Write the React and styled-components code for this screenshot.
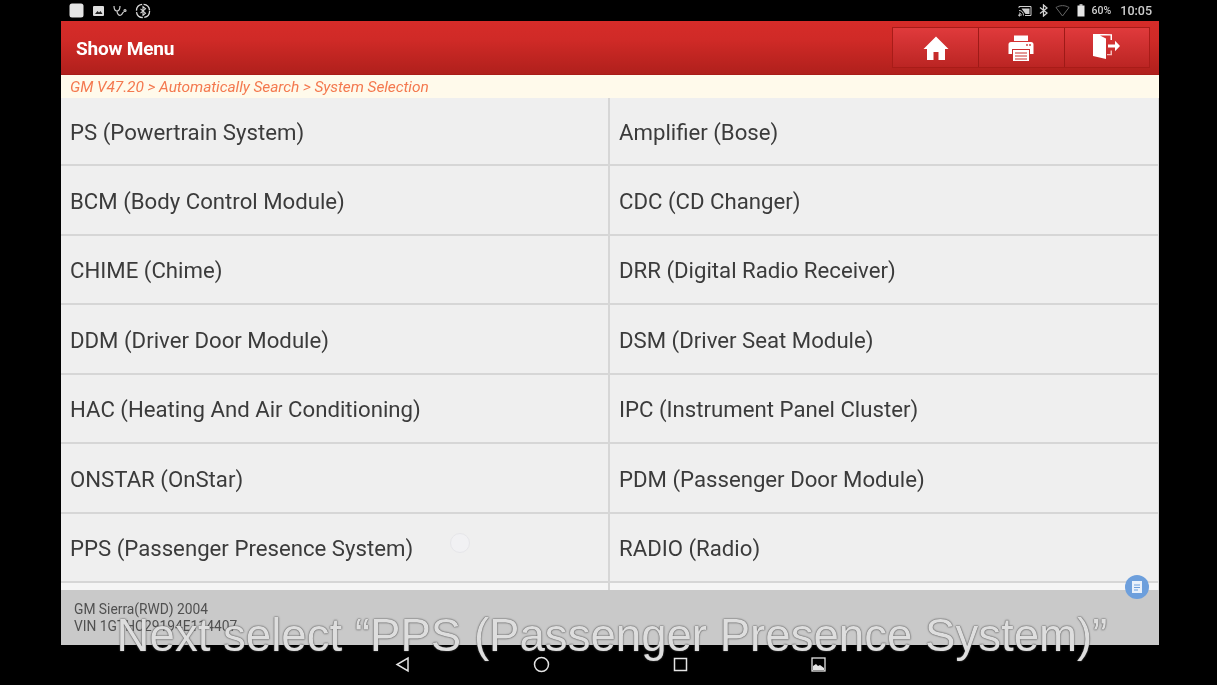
import React from "react";
import styled, { createGlobalStyle } from "styled-components";

const Global = createGlobalStyle`
  html, body { margin: 0; padding: 0; background: #000; }
  body { width: 1217px; height: 685px; overflow: hidden; font-family: Roboto, "Liberation Sans", sans-serif; }
`;

const Page = styled.div`
  position: relative;
  width: 1217px;
  height: 685px;
  background: #000;
  display: flex;
  flex-direction: column;
  overflow: hidden;
  filter: blur(0.45px);
`;
const StatusBar = styled.div`
  height: 21px;
  margin: 0 65px 0 69px;
  display: flex;
  align-items: center;
  justify-content: space-between;
  color: #d8d8d8;
`;
const StatusGroup = styled.div`
  display: flex;
  align-items: center;
  gap: ${(p) => p.$gap || 8}px;
`;
const StatusText = styled.span`
  font-size: ${(p) => p.$size}px;
  font-weight: 500;
  color: #cfcfcf;
  margin-left: ${(p) => p.$ml || 0}px;
`;
const Screen = styled.div`
  width: 1098px;
  margin-left: 61px;
  height: 624px;
  display: flex;
  flex-direction: column;
  background: #efefef;
`;
const Header = styled.div`
  height: 54px;
  box-sizing: border-box;
  background: linear-gradient(#d62c29 0%, #d02a27 35%, #b0201c 100%);
  border-bottom: 1px solid #a81c18;
  display: flex;
  align-items: center;
  justify-content: space-between;
  padding: 2px 9px 0 15px;
`;
const Title = styled.div`
  color: #fff;
  font-size: 19px;
  font-weight: 700;
  letter-spacing: -0.2px;
`;
const ButtonRow = styled.div`
  display: flex;
  margin-top: -2px;
  border: 1px solid #a81c18;
`;
const HeaderButton = styled.div`
  box-sizing: border-box;
  width: 85.4px;
  height: 39px;
  display: flex;
  align-items: center;
  justify-content: center;
  background: linear-gradient(#e03a3c, #bb2523);
  & + & { border-left: 1px solid #9e1a17; }
`;
const Crumb = styled.div`
  height: 23px;
  background: #fffaeb;
  color: #f4794f;
  font-size: 15.5px;
  font-style: italic;
  line-height: 24px;
  padding-left: 9px;
  letter-spacing: -0.08px;
`;
const List = styled.div`
  height: 492px;
  overflow: hidden;
  display: grid;
  grid-template-columns: 549px 1fr;
  grid-template-rows: 68px;
  grid-auto-rows: 69.5px;
  border-right: 1px solid #dcdcdc;
`;
const Cell = styled.div`
  box-sizing: border-box;
  display: flex;
  align-items: center;
  padding: ${(p) => (p.$first ? "1px" : "2px")} 0 0 9px;
  color: #3b3b3b;
  font-size: 22.2px;
  background: ${(p) => (p.$peek ? "#f5f5f5" : "#efefef")};
  border-bottom: 2px solid #d6d6d6;
  border-right: ${(p) => (p.$left ? "2px solid #d6d6d6" : "0")};
`;
const Footer = styled.div`
  height: 55px;
  box-sizing: border-box;
  background: #c9c9c9;
  color: #505050;
  font-size: 13.8px;
  line-height: 16.5px;
  padding: 11px 0 0 13px;
`;
const NavBar = styled.div`
  height: 40px;
  display: flex;
  align-items: center;
  padding: 0 0 0 394px;
  gap: 121.8px;
`;
const NavIcon = styled.svg`
  width: 17px;
  height: 17px;
  flex: none;
  margin-top: -1px;
`;
const Caption = styled.div`
  position: absolute;
  left: 0;
  right: 0;
  top: 609px;
  padding-left: 7px;
  text-align: center;
  font-family: "Liberation Sans", Arial, sans-serif;
  font-size: 45.6px;
  line-height: 54px;
  white-space: nowrap;
  color: #dedede;
  text-shadow: 0 0 2px #555, 0 0 1px #444;
`;
const Touch = styled.div`
  position: absolute;
  left: 450px;
  top: 533px;
  width: 18px;
  height: 18px;
  border-radius: 50%;
  border: 1px solid #e6e6e9;
  background: #f1f1f3;
`;
const Fab = styled.div`
  position: absolute;
  left: 1125px;
  top: 575px;
  width: 24px;
  height: 24px;
  border-radius: 50%;
  background: #6d9fdc;
  display: flex;
  align-items: center;
  justify-content: center;
`;

const rows = [
  ["PS (Powertrain System)", "Amplifier (Bose)"],
  ["BCM (Body Control Module)", "CDC (CD Changer)"],
  ["CHIME (Chime)", "DRR (Digital Radio Receiver)"],
  ["DDM (Driver Door Module)", "DSM (Driver Seat Module)"],
  ["HAC (Heating And Air Conditioning)", "IPC (Instrument Panel Cluster)"],
  ["ONSTAR (OnStar)", "PDM (Passenger Door Module)"],
  ["PPS (Passenger Presence System)", "RADIO (Radio)"],
  ["", ""],
];

export default function App() {
  return (
    <Page>
      <Global />
      <StatusBar>
        <StatusGroup $gap={8}>
          <svg width="15" height="15" viewBox="0 0 15 15"><rect x="0.5" y="0.5" width="14" height="14" rx="2.5" fill="#e4e4e4" /></svg>
          <svg width="13" height="12" viewBox="0 0 13 12"><rect x="1" y="1" width="11" height="10" rx="1" fill="#dedede" /><path d="M3 9l2.5-3 1.5 1.5L8.5 6 10.5 9z" fill="#222" /></svg>
          <svg width="14" height="13" viewBox="0 0 14 13" fill="none" stroke="#cfcfcf" strokeWidth="1.2"><path d="M1 2c0 3 1 5 3 5s3-2 3-5M4 7c0 3 2 5 4 4s1-3 3-3" /><circle cx="12" cy="6.5" r="1" /></svg>
          <svg width="16" height="16" viewBox="0 0 16 16" fill="none" stroke="#dcdcdc"><circle cx="8" cy="8" r="6.6" strokeWidth="1.3" strokeDasharray="9 1.5" /><path d="M5.5 5.8l5 4.4L8 12.4V3.6l2.5 2.2-5 4.4" strokeWidth="1.1" /></svg>
        </StatusGroup>
        <StatusGroup $gap={7}>
          <svg width="14" height="12" viewBox="0 0 14 12" fill="none" stroke="#cfcfcf"><path d="M1 3V1.5h12v9H7" /><path d="M3.5 3.5h8v5.5H7.5z" fill="#cfcfcf" stroke="none" /><path d="M1 5.5c3 0 4.5 2 4.5 5M1 8c1.500 0 2.300 1 2.300 2.500" /><circle cx="1.500" cy="10.200" r=".8" fill="#cfcfcf" /></svg>
          <svg width="9" height="13" viewBox="0 0 9 13" fill="none" stroke="#d4d4d4" strokeWidth="1.3"><path d="M1 3.500l7 5.500-3.500 3V1L8 4 1 9.500" /></svg>
          <svg width="15" height="12" viewBox="0 0 15 12" fill="none" stroke="#666"><path d="M1 2.500C5 0 10 0 14 2.500L7.500 11z" /></svg>
          <svg width="8" height="13" viewBox="0 0 8 13"><rect x="2.500" y="0" width="3" height="2" fill="#aaa" /><rect x="0.500" y="1.500" width="7" height="11" fill="#e6e6e6" /></svg>
          <StatusText $size={10.5}>60%</StatusText>
          <StatusText $size={12.5} $ml={2}>10:05</StatusText>
        </StatusGroup>
      </StatusBar>
      <Screen>
        <Header>
          <Title>Show Menu</Title>
          <ButtonRow>
            <HeaderButton>
              <svg width="26" height="26" viewBox="0 0 26 26"><path d="M13 1.500L25.500 14H22v11h-6.500v-8h-5v8H4V14H.5z" fill="#fff" /></svg>
            </HeaderButton>
            <HeaderButton>
              <svg width="28" height="28" viewBox="0 0 28 28">
                <path d="M7 1.500h14V7H7z" fill="#fff" />
                <path d="M4 8h20a2.500 2.500 0 0 1 2.500 2.500V20H23v-5H5v5H1.500v-9.500A2.500 2.500 0 0 1 4 8z" fill="#fff" />
                <path d="M6 16h16v11H6z" fill="#fff" />
                <path d="M8 19h12M8 22h12M8 25h12" stroke="#c9312f" strokeWidth="1" />
                <circle cx="20" cy="11" r=".9" fill="#c9312f" /><circle cx="23" cy="11" r=".9" fill="#c9312f" />
              </svg>
            </HeaderButton>
            <HeaderButton>
              <svg width="29" height="29" viewBox="0 0 29 29">
                <path d="M1 1h11.500L20 1.200V7h-1.500V2.500H8L14 5.500v20.500L1 23z" fill="#fff" />
                <path d="M18.500 17.500V21H15v1.300h5v-4.800z" fill="#f4b9b8" />
                <path d="M16 11.500h7V7.800l5 5.200-5 5.200v-3.700h-7z" fill="#fff" />
              </svg>
            </HeaderButton>
          </ButtonRow>
        </Header>
        <Crumb>GM V47.20 &gt; Automatically Search &gt; System Selection</Crumb>
        <List>
          {rows.map(([a, b], i) => (
            <React.Fragment key={i}>
              <Cell $left $first={i === 0} $peek={i === 7}>{a}</Cell>
              <Cell $first={i === 0} $peek={i === 7}>{b}</Cell>
            </React.Fragment>
          ))}
        </List>
        <Footer>
          GM Sierra(RWD) 2004
          <br />
          VIN 1GTHC29194E114407
        </Footer>
      </Screen>
      <NavBar>
        <NavIcon viewBox="0 0 17 17" fill="none" stroke="#e4e4e4" strokeWidth="1.500"><path d="M14 2v13L3 8.500z" /></NavIcon>
        <NavIcon viewBox="0 0 17 17" fill="none" stroke="#e4e4e4" strokeWidth="1.500"><circle cx="8.500" cy="8.500" r="7" /></NavIcon>
        <NavIcon viewBox="0 0 17 17" fill="none" stroke="#e4e4e4" strokeWidth="1.500"><rect x="2.500" y="2.500" width="12" height="12" /></NavIcon>
        <NavIcon viewBox="0 0 17 17"><rect x="2" y="2" width="13" height="13" fill="none" stroke="#e4e4e4" strokeWidth="1.300" /><path d="M3 14V10l3-2 2 2 2-1 4 3v2z" fill="#e4e4e4" /></NavIcon>
      </NavBar>
      <Touch />
      <Fab>
        <svg width="12" height="14" viewBox="0 0 12 14"><path d="M1 1h10v12H1z" fill="#e9f1fb" /><path d="M3 5h6M3 7.500h6M3 10h4" stroke="#6d9fdc" strokeWidth="1" /></svg>
      </Fab>
      <Caption>Next select “PPS (Passenger Presence System)”</Caption>
    </Page>
  );
}
